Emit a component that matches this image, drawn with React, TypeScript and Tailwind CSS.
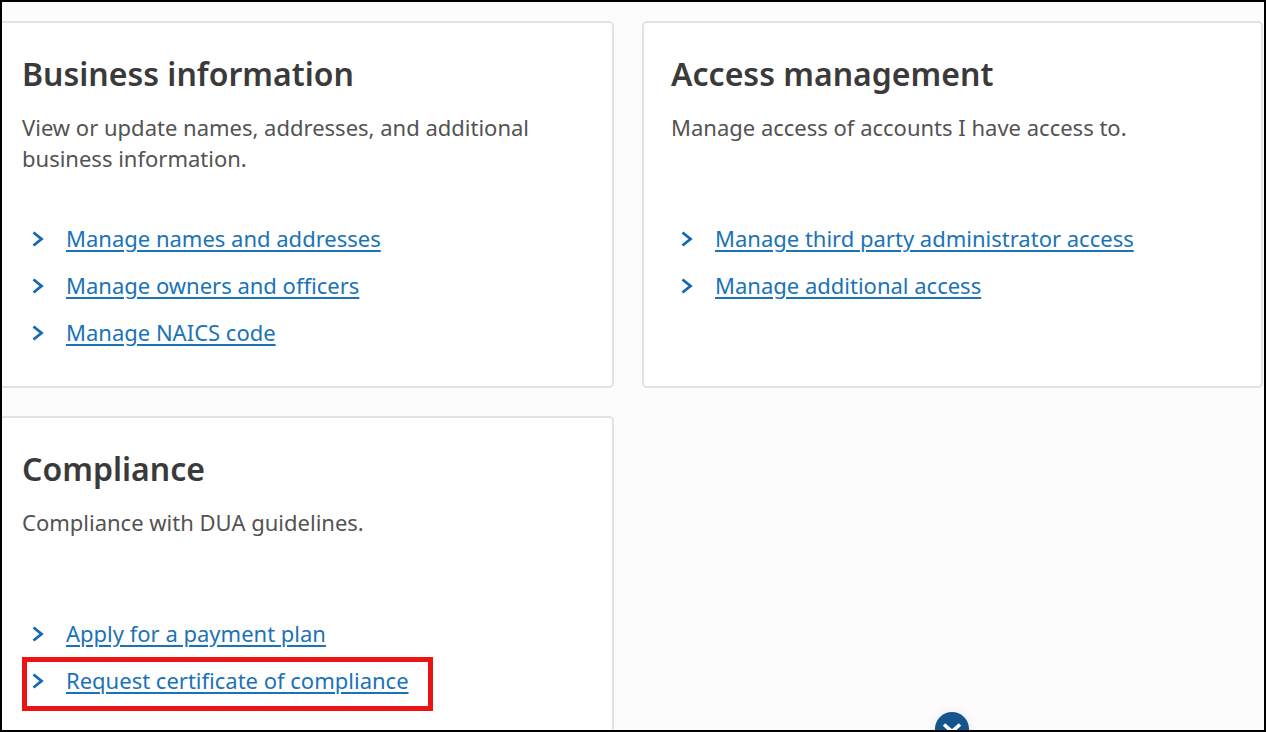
import React from 'react';

interface CardLink {
  label: string;
  highlighted?: boolean;
}

interface CardData {
  title: string;
  description: string;
  links: CardLink[];
}

const cards: CardData[] = [
  {
    title: 'Business information',
    description: 'View or update names, addresses, and additional business information.',
    links: [
      { label: 'Manage names and addresses' },
      { label: 'Manage owners and officers' },
      { label: 'Manage NAICS code' },
    ],
  },
  {
    title: 'Access management',
    description: 'Manage access of accounts I have access to.',
    links: [
      { label: 'Manage third party administrator access' },
      { label: 'Manage additional access' },
    ],
  },
  {
    title: 'Compliance',
    description: 'Compliance with DUA guidelines.',
    links: [
      { label: 'Apply for a payment plan' },
      { label: 'Request certificate of compliance', highlighted: true },
    ],
  },
];

function ChevronRight() {
  return (
    <svg viewBox="0 0 12 16" className="w-3 h-4 shrink-0" fill="none" stroke="#1467b3" strokeWidth="2.8" aria-hidden="true">
      <path d="M1.5 1.5 9.5 8l-8 6.5" />
    </svg>
  );
}

function ActionCard({ card }: { card: CardData }) {
  return (
    <section className="rounded-[5px] border-2 border-[#e2e2e2] bg-white px-[27px] pt-7 pb-[30px]">
      <h2 className="text-[32px] leading-[45px] font-semibold text-[#3a3a3a]">{card.title}</h2>
      <p className="mt-4 min-h-[62px] text-[22px] leading-[31px] text-[#535353]">{card.description}</p>
      <ul className="mt-[41px]">
        {card.links.map((link) => (
          <li key={link.label} className="relative flex w-fit items-center gap-[22px] pl-[10px] pr-6 h-[47px]">
            <ChevronRight />
            <a
              href="#"
              className="text-[22px] leading-[31px] text-[#1a73b8] underline decoration-2 underline-offset-[3px]"
            >
              {link.label}
            </a>
            {link.highlighted && (
              <span className="pointer-events-none absolute left-0 right-0 top-0 -bottom-[7px] border-[5px] border-[#ec1313]" />
            )}
          </li>
        ))}
      </ul>
    </section>
  );
}

const App: React.FC = () => (
  <main className="h-screen overflow-hidden border-2 border-black bg-[#fcfcfc] font-['Noto_Sans',sans-serif]">
    <div className="relative -ml-[9px] mr-px h-full pt-[19px]">
      <div className="grid grid-cols-2 gap-7">
        {cards.map((card) => (
          <ActionCard key={card.title} card={card} />
        ))}
      </div>
      {/* Scroll hint, floats over the bottom edge */}
      <button
        type="button"
        aria-label="Scroll down"
        className="absolute -bottom-4 left-[calc(75%+6px)] flex size-[34px] -translate-x-1/2 items-center justify-center rounded-full bg-[#14558f] shadow-[0_0_12px_rgba(0,0,0,0.08)]"
      >
        <svg viewBox="0 0 20 12" className="w-5 h-3" fill="none" stroke="white" strokeWidth="3.6" aria-hidden="true">
          <path d="m2 1.5 8 7 8-7" />
        </svg>
      </button>
    </div>
  </main>
);

export default App;
